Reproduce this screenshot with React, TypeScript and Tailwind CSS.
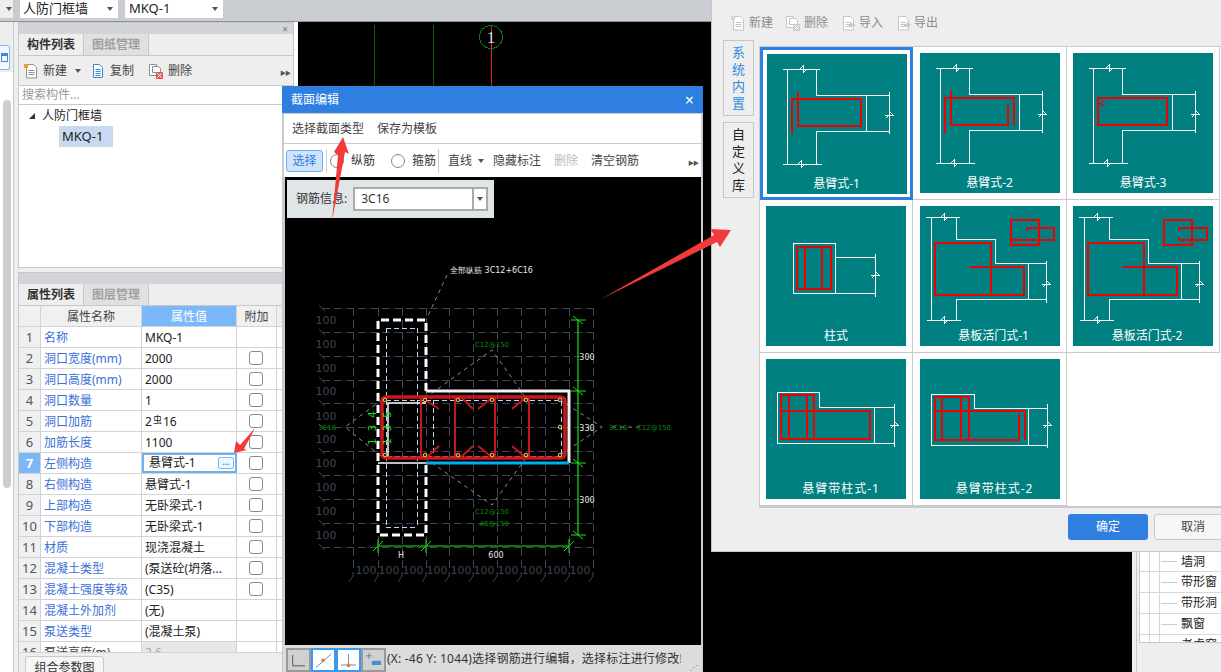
import type { ReactNode } from "react";

const rows = [
  ["名称", "MKQ-1", false],
  ["洞口宽度(mm)", "2000", true],
  ["洞口高度(mm)", "2000", true],
  ["洞口数量", "1", true],
  ["洞口加筋", "rebar", true],
  ["加筋长度", "1100", true],
  ["左侧构造", "悬臂式-1", true],
  ["右侧构造", "悬臂式-1", true],
  ["上部构造", "无卧梁式-1", true],
  ["下部构造", "无卧梁式-1", true],
  ["材质", "现浇混凝土", true],
  ["混凝土类型", "(泵送砼(坍落...", true],
  ["混凝土强度等级", "(C35)", true],
  ["混凝土外加剂", "(无)", false],
  ["泵送类型", "(混凝土泵)", false],
  ["泵送高度(m)", "2.6", false],
] as const;

/* ─── toolbar icons ─── */
function DocIcon({ kind, dim }: { kind: "new" | "copy" | "del" | "in" | "out"; dim?: boolean }) {
  const line = dim ? "#c4c4c4" : "#8a8f96";
  return (
    <svg width="16" height="16" viewBox="0 0 16 16" fill="none" className="shrink-0">
      {kind === "copy" ? (
        <>
          <path d="M2.5 1.5h6l3 3v10h-9z" fill="#fff" stroke="#3a8ad8" />
          <path d="M4.5 6.5h5M4.5 8.5h5M4.5 10.5h5M4.5 12.5h5" stroke="#3a8ad8" />
        </>
      ) : kind === "del" ? (
        <>
          <path d="M1.5 1.5h7v11h-7z" fill="#fff" stroke={line} />
          <path d="M4.5 3.5h6l2 2v4h-8z" fill="#fff" stroke={line} />
          <rect x="8" y="9" width="7" height="7" fill={dim ? "#cfcfcf" : "#e05a5a"} />
          <path d="M9.5 10.5l4 4M13.5 10.5l-4 4" stroke="#fff" />
        </>
      ) : (
        <>
          <path d="M3.5 1.5h7l3 3v10.500h-10z" fill="#fff" stroke={line} />
          <path d="M5.5 7.500h6M5.500 9.500h6M5.500 11.500h6" stroke={line} />
          {kind === "new" && <path d="M1 1h4v4h-4z" fill={dim ? "#d6d6d6" : "#f0a030"} />}
          {kind === "in" && <path d="M15 10h-5M12 8l-2.500 2 2.500 2" stroke={line} strokeWidth="1.500" />}
          {kind === "out" && <path d="M9 10h5M12 8l2.500 2-2.500 2" stroke={line} strokeWidth="1.500" />}
        </>
      )}
    </svg>
  );
}

function Caret({ className = "" }: { className?: string }) {
  return <span className={`w-0 h-0 border-x-[3.5px] border-x-transparent border-t-[4px] border-t-[#555] ${className}`} />;
}

function MoreArrows() {
  return <span className="text-[6px] text-[#555] tracking-[-1px] leading-none">▶▶</span>;
}

/* ─── left panels ─── */
function PanelTabs({ a, b }: { a: string; b: string }) {
  return (
    <div className="flex h-[22px] bg-[#eeeeee] border-b border-[#c6c8cc] shrink-0">
      <div className="w-[65px] flex items-center justify-center font-bold text-[#333] border-r border-[#c6c8cc]">{a}</div>
      <div className="w-[65px] flex items-center justify-center font-bold text-[#a0a0a0] bg-[#e0e0e0] border-r border-[#c6c8cc]">{b}</div>
    </div>
  );
}

function ListPanel() {
  return (
    <div className="h-[246px] flex flex-col border border-[#c6c8cc] bg-white overflow-hidden">
      <div className="h-[11px] bg-[#d2d4d8] flex justify-end items-center pr-[5px] text-[10px] text-[#777] leading-none shrink-0">×</div>
      <PanelTabs a="构件列表" b="图纸管理" />
      <div className="h-[30px] bg-[#eeeeee] border-b border-[#c6c8cc] flex items-center pl-[4px] text-[#444] shrink-0">
        <DocIcon kind="new" />
        <span className="ml-[4px]">新建</span>
        <Caret className="ml-[8px]" />
        <span className="ml-[10px]"><DocIcon kind="copy" /></span>
        <span className="ml-[3px]">复制</span>
        <span className="ml-[14px]"><DocIcon kind="del" /></span>
        <span className="ml-[4px]">删除</span>
        <span className="ml-auto mr-[3px]"><MoreArrows /></span>
      </div>
      <div className="h-[19px] border-b border-[#c6c8cc] flex items-center pl-[3px] text-[#999] shrink-0">
        搜索构件...
        <span className="ml-auto mr-[2px] w-[9px] h-[9px] rounded-full border border-[#3a8ad8]" />
      </div>
      <div className="flex items-center pl-[10px] pt-[1px] h-[21px] text-[#222]">
        <span className="w-0 h-0 border-l-[6px] border-l-transparent border-b-[6px] border-b-[#333]" />
        <span className="ml-[7px]">人防门框墙</span>
      </div>
      <div className="ml-[40px] w-[54px] h-[21px] flex items-center pl-[3px] bg-[#c8daf2] text-[#222] text-[13px]">MKQ-1</div>
    </div>
  );
}

function PropertyPanel() {
  return (
    <div className="flex-1 min-h-0 mt-[4px] flex flex-col border-t border-x border-[#c6c8cc] bg-[#eeeeee] overflow-hidden">
      <div className="h-[11px] bg-[#d2d4d8] shrink-0" />
      <PanelTabs a="属性列表" b="图层管理" />
      <div className="h-[346px] overflow-hidden shrink-0">
        <div className="flex h-[21px] border-b border-[#d0d3d8] text-[#444]">
          <div className="w-[22px] bg-[#f0f0f0] border-r border-[#d0d3d8]" />
          <div className="w-[101px] pt-[2px] bg-[#f0f0f0] border-r border-[#d0d3d8] flex items-center justify-center">属性名称</div>
          <div className="w-[95px] pt-[2px] bg-[#7ab8f8] text-white border-r border-[#d0d3d8] flex items-center justify-center">属性值</div>
          <div className="w-[40px] pt-[2px] bg-[#f0f0f0] border-r border-[#d0d3d8] flex items-center justify-center">附加</div>
        </div>
        {rows.map(([name, value, check], i) => {
          const active = i === 6;
          const locked = i === 15;
          return (
            <div key={i} className="flex h-[21px] border-b border-[#d0d3d8] bg-white">
              <div className={`w-[22px] pt-[2px] border-r border-[#d0d3d8] flex items-center justify-center text-[13px] ${active ? "bg-[#7ab8f8] text-white font-bold" : "bg-[#f0f0f0] text-[#555]"}`}>
                {i + 1}
              </div>
              <div className={`w-[101px] pt-[2px] border-r border-[#d0d3d8] flex items-center pl-[3px] ${locked ? "text-[#444]" : "text-[#3b6fd8]"}`}>{name}</div>
              <div className={`w-[95px] flex items-center text-[#222] ${active ? "border-2 border-[#6fb0f0] pl-[5px]" : "pt-[2px] pl-[3px] border-r border-[#d0d3d8]"} ${locked ? "bg-[#e8e8e8] text-[#aaa]" : ""}`}>
                {value === "rebar" ? (
                  <>2<span className="text-[9px] mx-[1px] -mt-[4px]">虫</span>16</>
                ) : (
                  value
                )}
                {active && (
                  <span className="ml-auto mr-[1px] w-[16px] h-[12px] rounded-[2px] border border-[#7ab8f8] bg-[#eef6ff] flex items-center justify-center text-[#4a90d9] text-[9px] font-bold leading-none">
                    ···
                  </span>
                )}
              </div>
              <div className="w-[40px] flex items-center pl-[12px] border-r border-[#d0d3d8]">
                {check && <span className="w-[14px] h-[14px] rounded-[3px] border border-[#8a8a8a] bg-white" />}
              </div>
            </div>
          );
        })}
      </div>
      <div className="flex-1 pl-[6px] pt-[3px] overflow-hidden border-t border-[#d0d3d8]">
        <div className="w-[79px] h-[24px] rounded-t-[3px] border border-[#c6c8cc] bg-[#f6f6f6] flex items-center justify-center text-[#333]">组合参数图</div>
      </div>
    </div>
  );
}

/* ─── section editor canvas ─── */
const gx = [353, 378, 402, 426, 449, 473, 497, 521, 545, 569, 593];
const gy = [308, 332, 356, 380, 403, 427, 451, 475, 499, 523, 547];
const gridColor = "#3d4552";
const dots = [385, 425, 458, 492, 526, 560];
const hooks = [
  "M425 400l14 9", "M461 397l12 12", "M478 409l14-11", "M512 409l13-11",
  "M427 457l12-11", "M461 457l12-11", "M478 446l14 11", "M512 446l13 11",
];

function SectionDrawing() {
  return (
    <svg viewBox="285 177 416 468" className="block w-[416px] h-[468px]" fontFamily="'DejaVu Sans', sans-serif">
      {/* grid */}
      <g stroke={gridColor} strokeDasharray="8 4" fill="none" shapeRendering="crispEdges">
        {gy.map((y) => <path key={y} d={`M322 ${y}H593`} />)}
        {gx.map((x) => <path key={x} d={`M${x} 308V572`} />)}
      </g>
      <g stroke={gridColor} fill="none">
        {gy.map((y) => <path key={y} d={`M319 ${y - 3}l6 6`} />)}
        {gx.map((x) => <path key={x} d={`M${x - 4} 582l4-6V572`} />)}
      </g>
      <g fill={gridColor} fontSize="11">
        {[320, 344, 368, 391, 416, 439, 463, 487, 511, 535].map((y) => (
          <text key={y} x="326" y={y + 4} textAnchor="middle">100</text>
        ))}
        {[366, 389, 413, 437, 461, 484, 508, 532, 557, 580].map((x) => (
          <text key={x} x={x} y="574" textAnchor="middle">100</text>
        ))}
      </g>
      {/* leader lines */}
      <g stroke="#8a8a8a" strokeDasharray="4 4" fill="none">
        <path d="M447 275L426 320" />
        <path d="M382 400L345 427L382 457" />
        <path d="M425 398L492 350L526 398" />
        <path d="M425 458L492 505L526 458" />
        <path d="M560 400L602 427L560 455" />
        <path d="M612 427H640" />
      </g>
      {/* light blue dashes */}
      <g stroke="#b8d8f8" strokeDasharray="5 3" fill="none" shapeRendering="crispEdges">
        <path d="M386 328V527M417 328V527M386 328H417M386 527H417" />
        <path d="M386 400H561V456H386M433 400V456" />
      </g>
      {/* concrete outline */}
      <path d="M426 391V320H378V535H426V463" fill="none" stroke="#fff" strokeWidth="3" strokeDasharray="8 4" />
      <path d="M426 391H569V463" fill="none" stroke="#f2f2f2" strokeWidth="3" />
      <path d="M378 463H426" stroke="#fff" strokeWidth="1.500" />
      <path d="M426 403H388V458" fill="none" stroke="#fff" strokeWidth="1.500" />
      <path d="M426 463H569" stroke="#00aeef" strokeWidth="3" />
      {/* rebar */}
      <rect x="382" y="397" width="183" height="61" rx="4" fill="none" stroke="#c8161d" strokeWidth="3.500" />
      <g stroke="#c8161d" strokeWidth="2" fill="none">
        <path d="M421 397V458M455 397V458M495 397V458M529 397V458" />
        {hooks.map((d) => <path key={d} d={d} />)}
      </g>
      <g fill="#222" stroke="#f0d040" strokeWidth="1">
        {dots.map((x) => <circle key={x} cx={x} cy="400" r="1.800" />)}
        {dots.map((x) => <circle key={x} cx={x} cy="455" r="1.800" />)}
        <circle cx="560" cy="427" r="1.800" />
      </g>
      {/* dimensions */}
      <g stroke="#19e019" fill="none">
        <path d="M578 320V535M378 546H569" strokeWidth="1.200" />
        <path d="M571 320H586M571 391H586M571 463H586M571 535H586" />
        <path d="M573 316l10 8M573 387l10 8M573 459l10 8M573 531l10 8" />
        <path d="M378 539V553M426 539V553M569 539V553" />
        <path d="M373 551l10-10M421 551l10-10M564 551l10-10" />
      </g>
      <g fill="#e8e8e8" fontSize="8" textAnchor="middle">
        <text x="587" y="360">300</text>
        <text x="587" y="431">330</text>
        <text x="587" y="503">300</text>
        <text x="401" y="558">H</text>
        <text x="496" y="558">600</text>
      </g>
      <g fill="#0a8a0a" fontSize="7" textAnchor="middle">
        <text x="492" y="347">C12@150</text>
        <text x="492" y="514">C12@150</text>
        <text x="494" y="526">A6@150</text>
        <text x="327" y="430">3C16</text>
        <text x="618" y="430">3C16</text>
        <text x="654" y="430">C12@150</text>
      </g>
      <text transform="translate(376 427) rotate(-90)" fill="#19e019" fontSize="10" textAnchor="middle" letterSpacing="2">1 3 4</text>
      <text transform="translate(391 427) rotate(-90)" fill="#19e019" fontSize="10" textAnchor="middle" letterSpacing="2">1 3 5</text>
      <text x="450" y="273" fill="#e8e8e8" fontSize="8">全部纵筋  3C12+6C16</text>
    </svg>
  );
}

function SectionDialog() {
  const statuses = [
    <path key="a" d="M5 6V19H20" stroke="#444" fill="none" />,
    <>
      <path d="M3 21L21 5" stroke="#4a78c0" />
      <rect x="9.500" y="10.500" width="4" height="4" fill="#f08030" />
    </>,
    <>
      <path d="M3 18H21M12 5V18" stroke="#4a78c0" />
      <rect x="10" y="16.500" width="4" height="4" fill="#f08030" />
    </>,
    <>
      <path d="M3 7h7M6.500 3.500v7" stroke="#4a78c0" />
      <rect x="10" y="13" width="11" height="5" fill="#4a88d8" />
    </>,
  ];
  return (
    <div className="absolute left-[282px] top-[86px] w-[421px] h-[586px] flex flex-col bg-[#c8ccd2] pl-[2px] pr-[2px]">
      <div className="-mx-[2px] h-[27px] bg-[#2e7fe0] text-white text-[12px] flex items-center pl-[9px] pr-[9px] shrink-0">
        截面编辑
        <span className="ml-auto text-[16px] leading-none">×</span>
      </div>
      <div className="h-[29px] mt-[1px] bg-white flex items-center pl-[8px] gap-[13px] text-[#444] shrink-0">
        <span>选择截面类型</span>
        <span>保存为模板</span>
      </div>
      <div className="h-[33px] mt-[1px] bg-white flex items-center pl-[2px] text-[#444] shrink-0">
        <span className="w-[37px] h-[22px] rounded-[3px] bg-[#cfe4fb] border border-[#6aaef0] text-[#2e7fe0] flex items-center justify-center">选择</span>
        <span className="ml-[3px] w-px h-[24px] bg-[#ccc]" />
        <span className="ml-[3px] w-[14px] h-[14px] rounded-full border border-[#888]" />
        <span className="ml-[7px] w-[24px] text-[#333]">纵筋</span>
        <span className="ml-[16px] w-[14px] h-[14px] rounded-full border border-[#888]" />
        <span className="ml-[7px] text-[#333]">箍筋</span>
        <span className="ml-[2px] w-px h-[24px] bg-[#ccc]" />
        <span className="ml-[9px]">直线</span>
        <Caret className="ml-[6px]" />
        <span className="ml-[9px]">隐藏标注</span>
        <span className="ml-[13px] text-[#bbb]">删除</span>
        <span className="ml-[13px]">清空钢筋</span>
        <span className="ml-auto mr-[3px]"><MoreArrows /></span>
      </div>
      <div className="relative flex-1 min-h-0 ml-px bg-black overflow-hidden">
        <SectionDrawing />
        <div className="absolute left-[2px] top-[3px] w-[207px] h-[38px] bg-[#e0e5e7] flex items-center pl-[9px] text-[#333]">
          钢筋信息:
          <div className="ml-[6px] w-[135px] h-[24px] border-2 border-[#aaa] bg-white flex items-center pl-[6px]">
            3C16
            <span className="ml-auto w-[14px] h-full border-l-2 border-[#aaa] flex items-center justify-center"><Caret /></span>
          </div>
        </div>
      </div>
      <div className="h-[27px] -mx-[1px] bg-[#dcdcdc] flex items-end pl-[3px] shrink-0">
        {statuses.map((icon, i) => (
          <svg
            key={i}
            width="25"
            height="24"
            viewBox="0 0 24 24"
            className={`shrink-0 border-2 ${i === 1 || i === 2 ? "bg-white border-[#3a9af0]" : "bg-[#d0d0d0] border-[#999]"}`}
          >
            {icon}
          </svg>
        ))}
        <span className="self-center ml-[1px] w-[294px] overflow-hidden whitespace-nowrap tracking-[0.2px] text-[#333]">(X: -46 Y: 1044)选择钢筋进行编辑，选择标注进行修改!</span>
        <span className="self-end ml-auto mr-[3px] mb-[1px] text-[8px] leading-[8px] text-[#777] tracking-[1px] text-right">⋰</span>
      </div>
    </div>
  );
}

/* ─── section type gallery ─── */
function Wall() {
  return (
    <>
      <path d="M16 15H53M16 110H55M20 15V110M49 15V41H122M49 110V77H122M122 38V80M99 41V77" />
      <path d="M33 15l3-3v7l3-3M31 110l3-3v7l3-3M118 61h8l-4-4M122 61l-3 3" />
    </>
  );
}

function Outline({ children, red }: { children: ReactNode; red: ReactNode }) {
  return (
    <svg width="140" height="120" viewBox="0 0 140 120" className="block shrink-0" fill="none" shapeRendering="crispEdges">
      <g stroke="#fff">{children}</g>
      <g stroke="#f00000" strokeWidth="1.500" strokeLinejoin="round">{red}</g>
    </svg>
  );
}

function Flap() {
  return (
    <>
      <path d="M6 11H40M11 11V114M7 114H41M36 11V33H75V57H126M126 55V97M108 57V93M36 114V93H126" />
      <path d="M21 11l3-3v7l3-3M21 114l3-3v7l3-3M122 78h8l-4-4M126 78l-3 3" />
    </>
  );
}

const cards: { label: string; pad: string; art: ReactNode }[] = [
  {
    label: "悬臂式-1",
    pad: "pl-0",
    art: <Outline red={<path d="M25 80V45H94V72H31V38" />}><Wall /></Outline>,
  },
  {
    label: "悬臂式-2",
    pad: "pl-0",
    art: <Outline red={<path d="M25 80V45H94V72M31 38V72H88V52" />}><Wall /></Outline>,
  },
  {
    label: "悬臂式-3",
    pad: "pl-0",
    art: <Outline red={<><rect x="25" y="45" width="69" height="27" /><path d="M26 51l6-3M27 53l5-2" strokeWidth="1" /></>}><Wall /></Outline>,
  },
  {
    label: "柱式",
    pad: "pl-0",
    art: (
      <Outline red={<><rect x="31" y="41" width="34" height="42" /><path d="M39 41V83M56 41V83" /></>}>
        <rect x="27" y="37" width="42" height="50" />
        <path d="M69 51H109M69 87H109M109 48V91M105 69h8l-4-4M109 69l-3 3" />
      </Outline>
    ),
  },
  {
    label: "悬板活门式-1",
    pad: "pl-[8px]",
    art: (
      <Outline red={<><path d="M50 61H104V89H15V37H71V89" /><rect x="91" y="14" width="28" height="25" /><path d="M107 22H134V34H92M107 22v3M93 32v3" /></>}>
        <Flap />
      </Outline>
    ),
  },
  {
    label: "悬板活门式-2",
    pad: "pl-[8px]",
    art: (
      <Outline red={<><path d="M50 61H104V89H15V37H71V89" /><rect x="91" y="14" width="28" height="25" /><path d="M106 22H134V34H106M106 22v3M106 34v-3" /></>}>
        <Flap />
      </Outline>
    ),
  },
  {
    label: "悬臂带柱式-1",
    pad: "pl-[10px] tracking-[1px]",
    art: (
      <Outline red={<><path d="M15 52H104V80H15V36H48V80" /><path d="M23 36V80M41 36V80" /></>}>
        <path d="M11 33H53V48H128M128 45V88M108 48V84M11 33V84H128M124 66h8l-4-4M128 66l-3 3" />
      </Outline>
    ),
  },
  {
    label: "悬臂带柱式-2",
    pad: "pl-[10px] tracking-[1px]",
    art: (
      <Outline red={<><path d="M15 52H105V81M99 55V81H15V38H49V81" /><path d="M22 38V81M41 38V81" /></>}>
        <path d="M11 35H54V49H127M127 45V89M108 49V86M11 35V86H127M123 66h8l-4-4M127 66l-3 3" />
      </Outline>
    ),
  },
];

function GalleryDialog() {
  const tools = [
    ["new", "新建"],
    ["del", "删除"],
    ["in", "导入"],
    ["out", "导出"],
  ] as const;
  return (
    <div className="absolute left-[711px] top-0 w-[510px] h-[552px] flex flex-col bg-[#eeeeee] border-l border-b border-[#c4c6ca]">
      <div className="h-[46px] pl-[18px] pt-[14px] flex gap-[12px] items-start text-[#8c8c8c] shrink-0">
        {tools.map(([kind, text]) => (
          <span key={kind} className="flex items-center gap-[3px] w-[43px] whitespace-nowrap">
            <DocIcon kind={kind} dim />
            <span>{text}</span>
          </span>
        ))}
      </div>
      <div className="flex h-[462px] shrink-0">
        <div className="w-[47px] pl-[11px] -mt-[6px] shrink-0">
          <div className="w-[31px] h-[76px] border border-[#c4c6ca] text-[#2e8ce0] text-[13px] leading-[17px] flex flex-col items-center justify-center">
            <span>系</span><span>统</span><span>内</span><span>置</span>
          </div>
          <div className="mt-[6px] w-[31px] h-[76px] border border-[#c4c6ca] text-[#222] text-[13px] leading-[17px] flex flex-col items-center justify-center">
            <span>自</span><span>定</span><span>义</span><span>库</span>
          </div>
        </div>
        <div className="flex-1 bg-white border-l border-t border-b-2 border-[#c8cace]">
          <div className="grid grid-cols-[153px_154px_153px] grid-rows-[153px_153px_153px]">
            {cards.map((card, i) => (
              <div
                key={card.label}
                className={`flex items-center justify-center ${i === 0 ? "border-[3px] border-[#2e7fe0]" : "border-r border-b border-[#c8cace]"}`}
              >
                <div className="w-[140px] h-[140px] bg-[#008080] flex flex-col">
                  {card.art}
                  <div className={`h-[20px] flex items-center justify-center text-white text-[12px] leading-none ${card.pad}`}>{card.label}</div>
                </div>
              </div>
            ))}
          </div>
        </div>
      </div>
      <div className="flex justify-end gap-[6px] pt-[6px] -mr-[11px]">
        <button className="w-[80px] h-[26px] rounded-[3px] bg-[#2e7fe0] text-white">确定</button>
        <button className="w-[78px] h-[26px] rounded-[3px] bg-[#f6f6f6] border border-[#c8cace] text-[#444]">取消</button>
      </div>
    </div>
  );
}

/* ─── red annotation arrows ─── */
function Arrows() {
  return (
    <svg width="1221" height="672" className="absolute inset-0 pointer-events-none" fill="#f23a3a">
      <path d="M332 221L338 155L334 152L343 137L349 154L345 152Z" />
      <path d="M601 299L714 235L710 229L731 230L720 247L717 242Z" />
      <path d="M234 453L236 441L240 445L255 428L244 449L247 450Z" />
    </svg>
  );
}

export default function App() {
  return (
    <div className="relative w-[1221px] h-[672px] overflow-hidden flex flex-col bg-[#eeeeee] font-['Noto_Sans','Noto_Sans_CJK_SC',sans-serif] text-[12px]">
      {/* top selector bar */}
      <div className="h-[22px] bg-[#c9ccd1] border-b border-[#8f9296] flex items-start shrink-0">
        <div className="w-[13px] h-[18px] bg-[#eeeeee] flex items-center justify-end pr-[1px]"><Caret /></div>
        <div className="ml-[7px] w-[98px] h-[18px] bg-white flex items-center pl-[3px] pr-[5px] text-[13px] text-[#222]">人防门框墙<Caret className="ml-auto" /></div>
        <div className="ml-[7px] w-[98px] h-[18px] bg-white flex items-center pl-[4px] pr-[5px] text-[13px] text-[#222]">MKQ-1<Caret className="ml-auto" /></div>
      </div>
      <div className="flex flex-1 min-h-0">
        {/* far left strip */}
        <div className="w-[14px] border-r border-[#c6c8cc] shrink-0 flex flex-col">
          <div className="h-[23px]" />
          <div className="w-[10px] h-[25px] rounded-r-[3px] border border-l-0 border-[#7ab8f8] bg-[#f4f9ff] flex items-center justify-end pr-[1px]">
            <span className="w-[7px] h-[9px] border border-[#3a8ad8] border-t-[3px]" />
          </div>
          <div className="flex-1 mt-[2px] bg-white pt-[28px] pl-[3px]">
            <div className="w-[8px] h-[388px] rounded-full bg-[#cdcdcd]" />
          </div>
        </div>
        <div className="w-[4px] shrink-0" />
        <div className="w-[276px] flex flex-col shrink-0">
          <ListPanel />
          <PropertyPanel />
        </div>
        <div className="w-[4px] bg-white shrink-0" />
        {/* drawing area */}
        <div className="flex-1 bg-black min-w-0">
          <svg width="300" height="64" viewBox="298 22 300 64" className="block" fill="none" shapeRendering="crispEdges">
            <path d="M374 25V86M433 25V86" stroke="#0c5a0c" />
            <path d="M491 25V86" stroke="#e02020" />
            <circle cx="491" cy="37" r="11.500" stroke="#0a7a0a" />
            <text x="491" y="43" fontSize="17" fill="#ddd" textAnchor="middle" fontFamily="'Liberation Serif', serif">1</text>
          </svg>
        </div>
        {/* right tree */}
        <div className="w-[89px] shrink-0 flex">
          <div className="w-[4px]" />
          <div className="flex-1 border-l border-[#c6c8cc] pl-[2px]">
            <div className="mt-[530px] h-[91px] border-l border-b border-[#c6c8cc] bg-white overflow-hidden text-[#222] text-[12px]">
              {["墙洞", "带形窗", "带形洞", "飘窗", "老虎窗"].map((t, i) => (
                <div key={t} className={`flex border-b border-[#d8d8d8] ${i === 0 ? "h-[20px]" : "h-[21px]"}`}>
                  <span className="w-[10px] border-r border-[#d8d8d8]" />
                  <span className="w-[10px] border-r border-[#d8d8d8]" />
                  <span className="ml-px w-[16px] self-center h-px bg-[#ccc]" />
                  <span className="ml-[4px] self-center whitespace-nowrap">{t}</span>
                </div>
              ))}
            </div>
          </div>
        </div>
      </div>
      <SectionDialog />
      <GalleryDialog />
      <Arrows />
    </div>
  );
}
